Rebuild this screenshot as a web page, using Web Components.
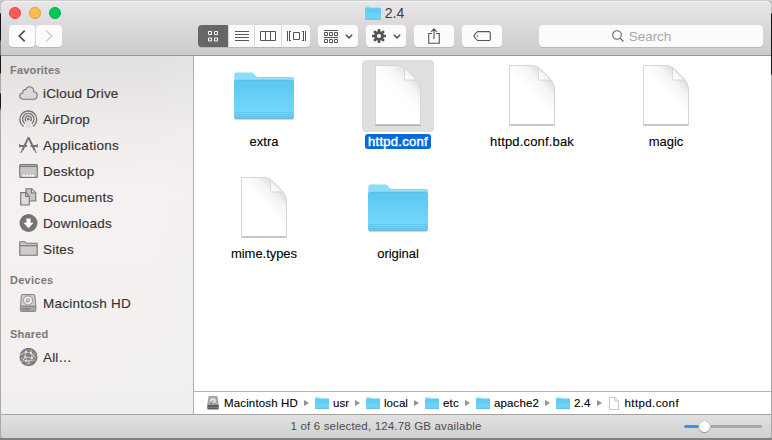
<!DOCTYPE html>
<html lang="en">
<head>
<meta charset="utf-8">
<title>2.4</title>
<style>
html,body{margin:0;width:772px;height:440px;overflow:hidden}
body{font-family:"Liberation Sans",Arial,sans-serif;color:#333}
</style>
</head>
<body>
<finder-window></finder-window>
<script>
/* html is a string, or a function of the element that gives one */
const define = (name, html, init) => customElements.define(name, class extends HTMLElement {
  connectedCallback() {
    if (this.shadowRoot) return;
    this.attachShadow({mode: 'open'}).innerHTML = typeof html === 'function' ? html(this) : html;
    if (init) init(this, this.shadowRoot);
  }
});
const attr = (el, n) => el.getAttribute(n) || '';
const label = el => `<ui-text value="${attr(el, 'label')}" w="${attr(el, 'w')}"></ui-text>`;

/* Small and large artwork, keyed by name */
const folder = `<svg width="100%" height="100%" viewBox="0 0 60 48" preserveAspectRatio="none"><defs><linearGradient id="f" x2="0" y2="1"><stop stop-color="#5ac8f0"/><stop offset=".8" stop-color="#74d5f8"/><stop offset="1" stop-color="#67ccf1"/></linearGradient></defs>
<path d="M.5 46V2.500Q.5.5 2.500.5H17q1.500 0 2.500 1L22 4q1 1.200 2.500 1.200H58q2 0 2 2V46z" fill="#8cdcfa"/><path d="M0 10.500q0-2 2-2H58q2 0 2 2V45.500q0 2-2 2H2q-2 0-2-2z" fill="url(#f)"/><path d="M.5 9.500Q1 8.500 2 8.500H58" fill="none" stroke="#50bde6" stroke-width=".8"/><path d="M0 41.500H60M0 43.500H60M0 45.500H60" stroke="#56b9df" stroke-width=".6" opacity=".7"/><path d="M1 47.300H59" stroke="#55b1d4" stroke-width=".8"/></svg>`;
const doc = `<svg width="100%" height="100%" viewBox="0 0 46 60"><defs><linearGradient id="g" x1=".75" y1=".12" x2=".48" y2=".46"><stop stop-color="#dedede"/><stop offset=".4" stop-color="#f5f5f5"/><stop offset="1" stop-color="#fff"/></linearGradient><linearGradient id="c" x1="0" y1="1" x2="1" y2="0"><stop stop-color="#fff"/><stop offset="1" stop-color="#e8e8e8"/></linearGradient></defs><path d="M.5.5H23q5 0 9 4l9 9q4.500 5 4.500 11V59.500H.5z" fill="url(#g)" stroke="#d6d6d6"/><path d="M.5 59.500h45" stroke="#c6c6c6"/><path d="M29.500 3v12h12.500z" fill="url(#c)" stroke="#d2d2d2" stroke-width=".8"/></svg>`;
const smallDoc = `<svg width="10" height="13" viewBox="0 0 10 13"><path d="M.5.5H6l3.500 3.500v8.500H.5z" fill="#fff" stroke="#c4c4c4"/><path d="M6 .5V4h3.500" fill="none" stroke="#c4c4c4"/></svg>`;
const svg = (w, h, body) => `<svg width="${w}" height="${h}" viewBox="0 0 ${w} ${h}" fill="none" stroke="#777475" stroke-width="1.1">${body}</svg>`;
const dots = (c) => `<g fill="none" stroke="${c}" stroke-width="1"><path d="M.5.5h3v3h-3zM6.500.5h3v3h-3zM.5 7h3v3h-3zM6.500 7h3v3h-3z"/></g>`;
const art = {
  folder, doc, page: smallDoc,
  cloud: svg(19,18,`<path d="M4.200 15.200Q.8 15 .8 12q0-2.600 3-3-.2-3.500 3-3.600Q8 2.600 10.500 2.700q4.300.2 4.300 5 3.400.3 3.400 3.800 0 3.500-3.600 3.700z" fill="#dcd8d8"/>`),
  airdrop: svg(19,18,`<path d="M4.600 16.400A8.400 8.400 0 1 1 14 16.400M5.800 13.600A5.700 5.700 0 1 1 12.800 13.600M7.300 11.300a3.100 3.100 0 1 1 4 0" stroke-width="1.350"/><path d="M9.300 9.500 6.500 17q2.800 1 5.600 0z" fill="#8a8786" stroke="none" opacity=".15"/><circle cx="9.300" cy="9" r="1.400" fill="#777475" stroke="none"/>`),
  apps: svg(19,18,`<path d="M9.700 1.300 3.200 14.500M9.300 1.300 15.800 14.500" stroke-width="2"/><path d="M.5 10h7.500M11 10h7.500" stroke-width="2"/><path d="M3 14.600 1.600 17M16 14.600l1.500 2.400M.7 8v3.500M18.300 8v3.500" stroke-width="1.100"/><path d="M8.700 4 13 13" stroke="#f4f0f0" stroke-width=".6"/>`),
  desktop: svg(19,18,`<rect x=".7" y="2.600" width="17.600" height="12.800" rx="1" fill="#c8c4c4"/><path d="M1 4.500h17" stroke-width="1"/><path d="M4 13.800h11" stroke="#f8f6f6" stroke-width="2" stroke-dasharray="2.200 .73"/>`),
  docs: svg(19,18,`<path d="M7 .8h5.800l3.900 4V13H7z" fill="#c9c5c5"/><path d="M12.500 1v4h4M1.700 4.600h5.100l3.500 3.600V17H1.700z" fill="#dedada"/><path d="M6.700 4.800v3.600h3.500"/>`),
  down: svg(19,18,`<circle cx="9.500" cy="9" r="9" fill="#777372" stroke="none"/><path d="M7.400 4.500h4.200v4.300h3L9.500 14.200 4.400 8.800h3z" fill="#fff" stroke="none"/>`),
  sites: svg(19,18,`<path d="M.8 15.300V2.600q0-.8.8-.8h4.200l1.500 1.500h10q.9 0 .9.900v11.100z" fill="#cecaca"/><path d="M1 5.700h17"/>`),
  disk: svg(19,18,`<path d="M3.300.6h11.400q1 0 1.200 1l1 11.400H1.500l.8-11.400q0-1 1-1z" fill="#d0cdcc" stroke-width=".9"/><rect x="1.400" y="12.200" width="15.400" height="5.200" rx="1" fill="#aaa7a6" stroke-width=".9"/><circle cx="9" cy="6.500" r="4.600" fill="#edebea" stroke-width=".7"/><circle cx="9" cy="6.300" r="1.500" stroke-width=".7"/><path d="M9 6.500 6.500 9" stroke-width=".7"/><path d="M3.500 14.900h8" stroke="#696665" stroke-width="2" stroke-dasharray="1 1"/>`),
  globe: svg(19,18,`<circle cx="9.500" cy="9" r="8.500" fill="#858281"/><path d="m1 7 6-3 5 1 5 5M3 14l3-5 7 1 3-5M7 2l-1 7 5 7M12 2l1 8-5 7M2 10l5 3 9-1" stroke="#d5d2d1" stroke-width=".8"/><g fill="#eee" stroke="none"><circle cx="7" cy="4" r="1"/><circle cx="12" cy="5" r="1"/><circle cx="6" cy="9" r="1"/><circle cx="13" cy="10" r="1.100"/><circle cx="7" cy="13" r="1"/></g>`),
  drive: `<svg width="12" height="14" viewBox="0 0 12 14"><path d="M2 .5h8l1.500 9h-11z" fill="#aeb3b6" stroke="#8e9396" stroke-width=".7"/><ellipse cx="6" cy="4.600" rx="3.700" ry="3.300" fill="#ddd" stroke="#777" stroke-width=".6"/><path d="M6 4.500 3.500 8" stroke="#777"/><rect x=".3" y="8.800" width="11.400" height="4.700" rx="1" fill="#5c5c5c"/><path d="M1.500 11.500h9" stroke="#999" stroke-dasharray="1 1"/></svg>`,
  back: `<svg width="8" height="12" viewBox="0 0 8 12" fill="none" stroke="#4c4c4c" stroke-width="1.700"><path d="M6.700.6 1.300 6l5.400 5.400"/></svg>`,
  fwd: `<svg width="8" height="12" viewBox="0 0 8 12" fill="none" stroke="#cfcfcf" stroke-width="1.500"><path d="m1.300.6 5.400 5.400-5.400 5.400"/></svg>`,
  grid: `<svg width="10" height="11" viewBox="0 0 10 11">${dots('#fff')}</svg>`,
  list: `<svg width="14" height="11" viewBox="0 0 14 11" stroke="#555"><path d="M0 .5h14M0 3.500h14M0 6.500h14M0 9.500h14"/></svg>`,
  cols: `<svg width="16" height="10" viewBox="0 0 16 10" fill="none" stroke="#555"><path d="M.5.5h15v9H.5zM5.500 0v10M10.500 0v10"/></svg>`,
  flow: `<svg width="19" height="10" viewBox="0 0 19 10" fill="none" stroke="#555"><path d="M6.500 1.500h6v7h-6zM.5 0v10M2.500 0v10M2.500.5h1.500M2.500 9.500h1.500M18.500 0v10M16.500 0v10M15 .5h1.500M15 9.500h1.500"/></svg>`,
  arrange: `<svg width="14" height="13" viewBox="0 0 14 13" fill="none" stroke="#555"><path d="M0 .5h14M0 7.500h14M.5 2.500h3v3h-3zM5.500 2.500h3v3h-3zM10.500 2.500h3v3h-3zM.5 9.500h3v3h-3zM5.500 9.500h3v3h-3zM10.500 9.500h3v3h-3z"/></svg>`,
  chev: `<svg width="8" height="5" viewBox="0 0 8 5" fill="none" stroke="#555" stroke-width="1.500"><path d="m.8.7 3.200 3.200L7.200.7"/></svg>`,
  gear: `<svg width="14" height="14" viewBox="-7 -7 14 14" fill="none" stroke="#555"><circle r="3.500" stroke-width="2.800"/><path d="M0-7V-4M0 7V4M-7 0h3M7 0H4M-4.950-4.950-3-3M4.950 4.950 3 3M-4.950 4.950-3 3M4.950-4.950 3-3" stroke-width="2.500"/></svg>`,
  share: `<svg width="12" height="16" viewBox="0 0 12 16" fill="none" stroke="#555" stroke-width="1.100"><path d="M4 5.500H.7v9.800h10.600V5.500H8M6 11V1M3.200 3.800 6 .9l2.800 2.900"/></svg>`,
  tag: `<svg width="18" height="10" viewBox="0 0 18 10" fill="none" stroke="#555" stroke-width="1.100"><path d="M5 .6h11q1.300 0 1.300 1.300v6.300q0 1.300-1.300 1.300H5Q3.800 9.500.8 5 3.800.6 5 .6z"/><circle cx="4.500" cy="5" r=".8" fill="#555" stroke="none"/></svg>`,
  lens: `<svg width="12" height="12" viewBox="0 0 12 12" fill="none" stroke="#626262" stroke-width="1.100"><circle cx="5" cy="5" r="4.300"/><path d="m8.100 8.100 3.400 3.400"/></svg>`
};

define('ui-icon', el => `<style>:host{display:block;flex:none}svg{display:block}</style>${art[attr(el, 'name')]}`);

/* Single line of text tracked to the width given in the "w" attribute */
define('ui-text', el => `<style>:host{display:block;flex:none;white-space:nowrap}span{display:inline-block}</style><span>${attr(el, 'value')}</span>`, (el, root) => {
  const s = root.querySelector('span'), w = +attr(el, 'w');
  s.style.letterSpacing = ((w - s.getBoundingClientRect().width) / s.textContent.length) + 'px';
  el.style.width = w + 'px';
});

define('tool-button', `<style>:host{display:flex;align-items:center;justify-content:center;box-sizing:border-box;height:22px;background:#fbfbfb;border-radius:4px;box-shadow:0 1px 0 #b9b7b9}</style><slot></slot>`);

define('title-bar', `<style>
:host{display:flex;flex-direction:column;box-sizing:border-box;height:55px;border-bottom:1px solid #979597;background:linear-gradient(#e8e6e8,#cccacc);border-radius:5px 5px 0 0;box-shadow:inset 0 1px #f5f4f5}
.top{height:24px;display:grid;grid-template-columns:60px 1fr 60px;align-items:center;padding:0 8px}
.lights{display:flex;gap:8px}.lights i{width:12px;height:12px;box-sizing:border-box;border-radius:50%;background:#fc5b57;border:1px solid #e2443f}
.lights i:nth-child(2){background:#fdbc4b;border-color:#e1a13a}.lights i:nth-child(3){background:#00ca56;border-color:#00ac42}
.title{display:flex;gap:4px;justify-content:center;align-items:center;font-size:14px;color:#3e3d3e;padding:0 3px 1px 0}
.title ui-icon{width:16px;height:14px}
.tools{display:flex;height:22px;padding-left:8px}
.nav{display:flex;gap:1px;margin-right:136px}
.seg{display:flex;margin-right:8px}.seg tool-button{border-radius:0;border-left:1px solid #d8d8d8}
.seg tool-button:first-child{background:#666;border:0;border-radius:4px 0 0 4px}.seg tool-button:last-child{border-radius:0 4px 4px 0}
.one{width:40px;margin-right:8px}.menu{gap:7px}
.search{width:224px;margin-left:29px;padding-right:19px;gap:5px;font-size:13.500px;color:#a7a7a7}
</style><div class="top"><div class="lights"><i></i><i></i><i></i></div><div class="title"><ui-icon name="folder"></ui-icon><ui-text value="2.4" w="19.500"></ui-text></div></div>
<div class="tools"><div class="nav"><tool-button style="width:26px"><ui-icon name="back"></ui-icon></tool-button><tool-button style="width:26px"><ui-icon name="fwd"></ui-icon></tool-button></div>
<div class="seg"><tool-button style="width:30px"><ui-icon name="grid"></ui-icon></tool-button><tool-button style="width:26px"><ui-icon name="list"></ui-icon></tool-button><tool-button style="width:27px"><ui-icon name="cols"></ui-icon></tool-button><tool-button style="width:29px"><ui-icon name="flow"></ui-icon></tool-button></div>
<tool-button class="one menu"><ui-icon name="arrange"></ui-icon><ui-icon name="chev"></ui-icon></tool-button>
<tool-button class="one menu"><ui-icon name="gear"></ui-icon><ui-icon name="chev"></ui-icon></tool-button>
<tool-button class="one"><ui-icon name="share"></ui-icon></tool-button><tool-button class="one"><ui-icon name="tag"></ui-icon></tool-button>
<tool-button class="search"><ui-icon name="lens"></ui-icon><ui-text value="Search" w="42.500"></ui-text></tool-button></div>`);

define('side-item', el => `<style>:host{display:flex;height:26px;align-items:center;gap:5px;padding-left:18px;font-size:13.500px;color:#353334;-webkit-text-stroke:.15px}</style><ui-icon name="${attr(el, 'icon')}"></ui-icon>${label(el)}`);
define('side-group', el => `<style>:host{display:block;margin-bottom:8px}header{display:flex;align-items:center;height:20px;padding-left:9px;font-weight:bold;font-size:11px;color:#7b7878}</style><header>${label(el)}</header><slot></slot>`);
define('side-bar', `<style>:host{display:block;box-sizing:border-box;width:193px;padding-top:4px;border-right:1px solid #b4b0b1;background:linear-gradient(100deg,transparent 60%,#efeff080),linear-gradient(#e2dfdf,#f0eceb 22%,#f6f1f1 38%,#f5f0f0 75%,#f1eeef)}</style>
<side-group label="Favorites" w="50.500"><side-item icon="cloud" label="iCloud Drive" w="75.500"></side-item><side-item icon="airdrop" label="AirDrop" w="47"></side-item><side-item icon="apps" label="Applications" w="76"></side-item><side-item icon="desktop" label="Desktop" w="51.500"></side-item><side-item icon="docs" label="Documents" w="70.500"></side-item><side-item icon="down" label="Downloads" w="69"></side-item><side-item icon="sites" label="Sites" w="31"></side-item></side-group>
<side-group label="Devices" w="43.500"><side-item icon="disk" label="Macintosh HD" w="88"></side-item></side-group>
<side-group label="Shared" w="38.500"><side-item icon="globe" label="All…" w="29"></side-item></side-group>`);

define('file-item', el => `<style>:host{display:flex;flex-direction:column;align-items:center;height:112px;font-size:13px;color:#000;-webkit-text-stroke:.1px}
.pic{width:72px;height:72px;box-sizing:border-box;border-radius:4px}
.pic.folder{padding:12px 6px}.pic.doc{padding:5px 13px 7px}
ui-icon{width:60px;height:47px;filter:drop-shadow(0 1px .6px #0003)}.doc ui-icon{width:46px;height:60px}
.name{margin-top:2px;height:15px;line-height:15px;padding:0 3px;border-radius:3px}
:host([selected]) .pic{background:#dfdfdf}:host([selected]) .name{background:#0869d9;color:#fff;-webkit-text-stroke:.45px}</style>
<div class="pic ${attr(el, 'kind')}"><ui-icon name="${attr(el, 'kind')}"></ui-icon></div><div class="name">${label(el)}</div>`);

define('path-item', el => `<style>:host{display:flex;align-items:center;font-size:11.500px;color:#000;-webkit-text-stroke:.1px}
ui-text{padding-bottom:1px}
ui-icon{width:14px;height:12px;margin-right:4px}ui-icon[name=drive]{width:12px;height:14px;margin-right:5px}ui-icon[name=page]{width:10px;height:13px;margin:0 6px 0 1px}
b{width:0;height:0;border:solid transparent;border-width:3px 0 3px 5px;border-left-color:#929292;margin:0 6px}:host([last]) b{display:none}</style><ui-icon name="${attr(el, 'icon')}"></ui-icon>${label(el)}<b></b>`);

define('file-area', `<style>:host{display:flex;flex-direction:column;flex:1;background:#fff}
.files{flex:1;display:grid;grid-template-columns:repeat(4,134px);grid-auto-rows:112px;padding:4px 0 0 3px;align-content:start}
.path{height:22px;border-top:1px solid #b5b5b5;display:flex;align-items:center;padding-left:13px}</style>
<div class="files"><file-item kind="folder" label="extra" w="29"></file-item><file-item kind="doc" label="httpd.conf" w="60" selected></file-item><file-item kind="doc" label="httpd.conf.bak" w="84"></file-item><file-item kind="doc" label="magic" w="34.500"></file-item><file-item kind="doc" label="mime.types" w="66"></file-item><file-item kind="folder" label="original" w="41.500"></file-item></div>
<div class="path"><path-item icon="drive" label="Macintosh HD" w="74"></path-item><path-item icon="folder" label="usr" w="16"></path-item><path-item icon="folder" label="local" w="24"></path-item><path-item icon="folder" label="etc" w="16"></path-item><path-item icon="folder" label="apache2" w="45"></path-item><path-item icon="folder" label="2.4" w="16.500"></path-item><path-item icon="page" label="httpd.conf" w="54.500" last></path-item></div>`);

define('status-bar', `<style>:host{display:grid;grid-template-columns:1fr auto 1fr;align-items:center;box-sizing:border-box;height:24px;padding:0 9px;border-top:1px solid #a3a1a2;background:linear-gradient(#e2e1e2,#d1d0d1);border-radius:0 0 4px 4px;font-size:11.500px;color:#4d4c4d}
ui-text{padding-bottom:1px}
.slider{justify-self:end;display:flex;align-items:center;width:78px}.slider i{height:3px;background:#a9a8a9;border-radius:2px;flex:1}.slider i:first-child{flex:0 0 15px;background:#3296f4}.slider b{width:11px;height:11px;border-radius:50%;background:#fff;box-shadow:0 0 1px #777,0 1px 1px #0004}</style><span></span><ui-text value="1 of 6 selected, 124.78 GB available" w="191"></ui-text><div class="slider"><i></i><b></b><i></i></div>`);

define('finder-window', `<style>:host{display:flex;flex-direction:column;box-sizing:border-box;width:772px;height:440px;padding:1px 1px 2px;background:linear-gradient(#cecdcf 0 1px,transparent 1px),linear-gradient(transparent 438px,#818181 438px),linear-gradient(#c5c4c5 13px,#171717 14px 74px,#aaa 75px) right/1px 100% no-repeat,linear-gradient(#c5c4c5 13px,#171719 14px 39px,#777 42px 55px,#16161c 56px 73px,#aaa 74px 93px,#17171c 94px 107px,#4474b4 109px,#aaa 112px) left/1px 100% no-repeat,#bbb}
main{flex:1;display:flex;min-height:0}</style><title-bar></title-bar><main><side-bar></side-bar><file-area></file-area></main><status-bar></status-bar>`);
</script>
</body>
</html>
